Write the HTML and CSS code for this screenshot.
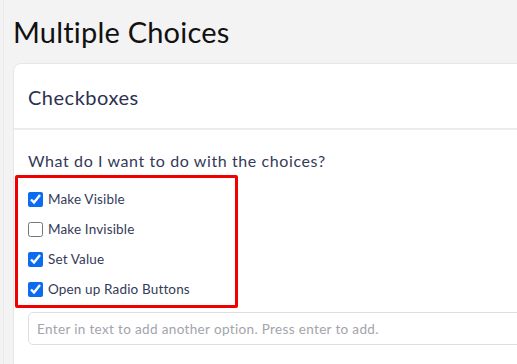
FILE: index.html
```html
<!DOCTYPE html>
<html lang="en">
<head>
    <meta charset="UTF-8">
    <meta name="viewport" content="width=device-width, initial-scale=1.0">
    <title>Multiple Choices</title>
    <link rel="stylesheet" href="styles.css">
</head>
<body>
    <div class="page">
        <h1>Multiple Choices</h1>

        <div class="card">
            <div class="card-head">Checkboxes</div>
            <div class="card-body">
                <p class="question">What do I want to do with the choices?</p>
                <div class="choices">
                    <label class="choice"><input type="checkbox" checked> Make Visible</label>
                    <label class="choice"><input type="checkbox"> Make Invisible</label>
                    <label class="choice"><input type="checkbox" checked> Set Value</label>
                    <label class="choice"><input type="checkbox" checked> Open up Radio Buttons</label>
                </div>
                <input type="text" class="add-option" placeholder="Enter in text to add another option. Press enter to add.">
            </div>
        </div>
    </div>
</body>
</html>
```

FILE: styles.css
```css
body {
    margin: 0;
    padding: 0;
    background-color: #f3f3f3;
    font-family: Lato, "Noto Sans", sans-serif;
    color: #2c3150;
    overflow: hidden;
    height: 364px;
}

.page {
    margin-left: 3px;
    padding-left: 9px;
    background-color: #f3f3f3;
    border-left: 1px solid #e9e9e9;
    height: 364px;
    overflow: hidden;
}

h1 {
    margin: 0;
    padding-left: 0;
    height: 63px;
    line-height: 64px;
    font-size: 29px;
    font-weight: 400;
    letter-spacing: 0.2px;
    color: #111;
}

.card {
    width: 620px;
    background-color: #fff;
    border: 1px solid #e6e6e6;
    border-radius: 8px 0 0 0;
    height: 300px;
}

.card-head {
    height: 64px;
    line-height: 66px;
    padding-left: 14px;
    font-size: 20px;
    letter-spacing: 0.5px;
    color: #2c3150;
    border-bottom: 2px solid #e9ebef;
}

.card-body {
    padding: 0 14px;
}

.question {
    margin: 0;
    padding-top: 21px;
    height: 45px;
    box-sizing: border-box;
    font-size: 16px;
    letter-spacing: 0.6px;
    color: #343a58;
}

.choices {
    width: 223px;
    margin-left: -13px;
    padding: 6px 0 1px 10px;
    border: 3px solid #f00000;
    border-radius: 2px;
    box-sizing: border-box;
}

.choice {
    display: flex;
    align-items: center;
    height: 30px;
    font-size: 13.5px;
    letter-spacing: 0.15px;
    color: #343a58;
}

.choice input {
    width: 15px;
    height: 15px;
    margin: 0 5px 0 0;
    accent-color: #0b6cf0;
}

.add-option {
    display: block;
    margin-top: 4px;
    width: 560px;
    height: 33px;
    padding: 0 8px;
    border: 1px solid #dcdfe6;
    border-radius: 5px;
    font-family: Lato, "Noto Sans", sans-serif;
    font-size: 13.5px;
    letter-spacing: 0.35px;
    box-sizing: border-box;
}

.add-option::placeholder {
    color: #a3a3ab;
}
```
